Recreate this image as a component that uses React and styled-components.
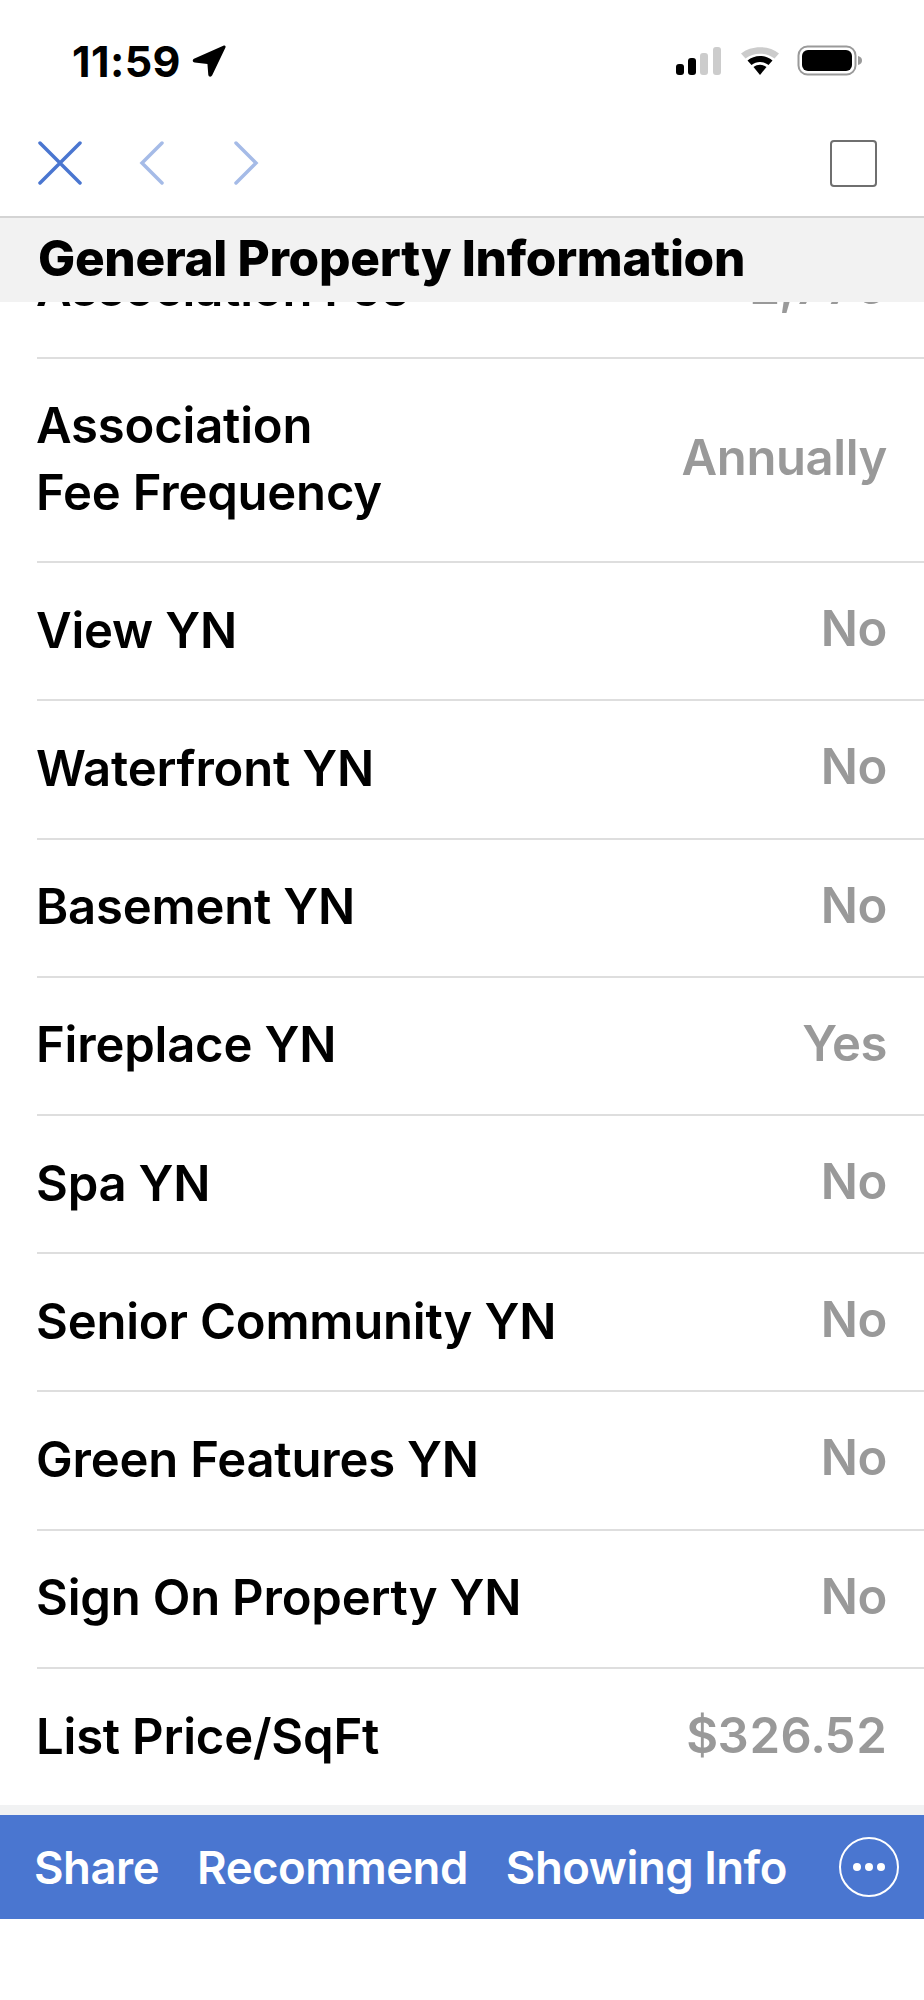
import React from "react";
import styled, { createGlobalStyle } from "styled-components";

const rows = [
  { label: "Association Fee", value: "2,775" },
  { label: ["Association", "Fee Frequency"], value: "Annually" },
  { label: "View YN", value: "No" },
  { label: "Waterfront YN", value: "No" },
  { label: "Basement YN", value: "No" },
  { label: "Fireplace YN", value: "Yes" },
  { label: "Spa YN", value: "No" },
  { label: "Senior Community YN", value: "No" },
  { label: "Green Features YN", value: "No" },
  { label: "Sign On Property YN", value: "No" },
  { label: "List Price/SqFt", value: "$326.52" },
];

function StatusIcons() {
  return (
    <Indicators>
      <svg width="48" height="30" viewBox="0 0 48 30">
        <rect x="1" y="18" width="8" height="11" rx="3" fill="#000" />
        <rect x="13" y="12" width="8" height="17" rx="3" fill="#000" />
        <rect x="25" y="7" width="8" height="22" rx="3" fill="#ccc" />
        <rect x="38" y="1" width="8" height="28" rx="3" fill="#ccc" />
      </svg>
      <svg width="40" height="30" viewBox="0 0 40 30">
        <path d="M1 7.5C11 -1 29 -1 39 7.5L34.5 12.5C26.5 6 13.5 6 5.500 12.500Z" fill="#ccc" />
        <path d="M7.500 14.500C14.500 8.500 25.500 8.500 32.500 14.500L28.500 19C23.500 15 16.500 15 11.500 19Z" fill="#000" />
        <path d="M13.500 21C17.500 18 22.500 18 26.500 21L20 29Z" fill="#000" />
      </svg>
      <svg width="66" height="32" viewBox="0 0 66 32">
        <rect x="1.500" y="1.500" width="57" height="28" rx="9" fill="none" stroke="#9a9a9a" strokeWidth="2" />
        <rect x="5" y="5" width="50" height="21" rx="6" fill="#000" />
        <path d="M61 11C64 11.500 65 13.500 65 15.500C65 17.500 64 19.500 61 20Z" fill="#9a9a9a" />
      </svg>
    </Indicators>
  );
}

function App() {
  return (
    <Screen>
      <GlobalStyle />
      <StatusBar>
        <Clock>
          11:59
          <svg width="35" height="35" viewBox="0 0 33 33">
            <path d="M31 1.500C32 1 33 2 32.500 3.200L20 29.500C19 31.500 16.500 31 16.300 29L15.500 18.800L3.500 17.500C1.500 17.300 1 15 2.800 14Z" fill="#000" />
          </svg>
        </Clock>
        <StatusIcons />
      </StatusBar>
      <NavBar>
        <NavGroup>
          <svg width="44" height="44" viewBox="0 0 44 44">
            <path d="M2 2L42 42M42 2L2 42" stroke="#4a76d0" strokeWidth="3.500" strokeLinecap="round" />
          </svg>
          <svg width="26" height="44" viewBox="0 0 26 44">
            <path d="M23 2L3 22L23 42" fill="none" stroke="#a5bbe7" strokeWidth="3.500" strokeLinecap="round" />
          </svg>
          <NextIcon width="26" height="44" viewBox="0 0 26 44">
            <path d="M3 2L23 22L3 42" fill="none" stroke="#a5bbe7" strokeWidth="3.500" strokeLinecap="round" />
          </NextIcon>
        </NavGroup>
        <CheckBox />
      </NavBar>
      <SectionHeader>General Property Information</SectionHeader>
      <List>
        {rows.map((row) => (
          <Row key={row.value + row.label}>
            <Label>
              {Array.isArray(row.label)
                ? row.label.map((line) => <div key={line}>{line}</div>)
                : row.label}
            </Label>
            <Value>{row.value}</Value>
          </Row>
        ))}
      </List>
      <Strip />
      <ActionBar>
        <Actions>
          <span>Share</span>
          <span>Recommend</span>
          <span>Showing Info</span>
        </Actions>
        <MoreButton>
          <i />
          <i />
          <i />
        </MoreButton>
      </ActionBar>
    </Screen>
  );
}

const GlobalStyle = createGlobalStyle`
  html, body {
    margin: 0;
    background: #fff;
  }
`;

const Screen = styled.div`
  width: 924px;
  height: 2000px;
  display: flex;
  flex-direction: column;
  background: #fff;
  color: #000;
  font-family: Inter, "Liberation Sans", sans-serif;
  overflow: hidden;
`;

const StatusBar = styled.div`
  height: 126px;
  flex: none;
  display: flex;
  align-items: flex-start;
  justify-content: space-between;
  padding: 45px 61px 0 72px;
  box-sizing: border-box;
`;

const Clock = styled.div`
  display: flex;
  align-items: center;
  gap: 10px;
  height: 32px;
  font-size: 43px;
  font-weight: 700;
  letter-spacing: 0.4px;
`;

const Indicators = styled.div`
  display: flex;
  align-items: center;
  gap: 17px;
  height: 32px;
`;

const NavBar = styled.div`
  height: 90px;
  flex: none;
  display: flex;
  align-items: center;
  justify-content: space-between;
  padding: 0 47px 0 38px;
  box-sizing: border-box;
`;

const NavGroup = styled.div`
  display: flex;
  align-items: center;
  gap: 57px;
  margin-bottom: 16px;
`;

const NextIcon = styled.svg`
  margin-left: 11px;
`;

const CheckBox = styled.div`
  width: 47px;
  height: 47px;
  box-sizing: border-box;
  border: 2px solid #6f6f6f;
  border-radius: 4px;
  margin-bottom: 16px;
`;

const SectionHeader = styled.div`
  height: 86px;
  flex: none;
  box-sizing: border-box;
  border-top: 2px solid #d4d4d4;
  background: #f2f2f2;
  padding: 9px 0 0 38px;
  font-size: 49.500px;
  line-height: 62px;
  font-weight: 800;
  letter-spacing: -0.3px;
  position: relative;
  z-index: 1;
`;

const List = styled.div`
  height: 1503px;
  flex: none;
  overflow: hidden;
`;

const Row = styled.div`
  display: flex;
  align-items: center;
  justify-content: space-between;
  box-sizing: border-box;
  min-height: 138.200px;
  padding: 33px 37px 35px 0;
  margin-left: 37px;
  border-bottom: 2px solid #dedede;
  &:first-child {
    margin-top: -81px;
  }
  &:last-child {
    border-bottom: 0;
  }
`;

const Label = styled.div`
  font-size: 49px;
  line-height: 67px;
  font-weight: 600;
  letter-spacing: -0.2px;
  margin-left: -1px;
`;

const Value = styled.div`
  font-size: 49px;
  line-height: 67px;
  font-weight: 600;
  letter-spacing: -0.4px;
  font-feature-settings: "tnum";
  color: #999;
  margin-top: -3px;
`;

const Strip = styled.div`
  height: 10px;
  flex: none;
  background: #f1f2f3;
`;

const ActionBar = styled.div`
  height: 104px;
  flex: none;
  display: flex;
  align-items: center;
  justify-content: space-between;
  padding: 0 25px 0 34px;
  background: #4a76d0;
  color: #fff;
`;

const Actions = styled.div`
  display: flex;
  gap: 38px;
  font-size: 45.500px;
  font-weight: 600;
  letter-spacing: -0.5px;
`;

const MoreButton = styled.div`
  width: 60px;
  height: 60px;
  box-sizing: border-box;
  border: 2px solid #fff;
  border-radius: 50%;
  display: flex;
  align-items: center;
  justify-content: center;
  gap: 4px;
  i {
    width: 8px;
    height: 8px;
    border-radius: 50%;
    background: #fff;
  }
`;

export default App;
